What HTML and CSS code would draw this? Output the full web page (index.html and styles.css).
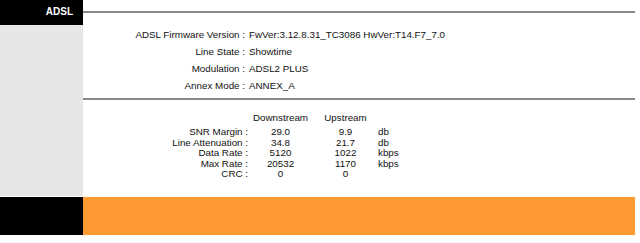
FILE: index.html
```html
<!DOCTYPE html>
<html lang="en">
<head>
    <meta charset="UTF-8">
    <title>ADSL</title>
    <link rel="stylesheet" href="styles.css">
</head>
<body>
    <div class="page">
        <div class="side side-head">ADSL</div>
        <div class="main main-head"><div class="rule"></div></div>

        <div class="side side-body"></div>
        <div class="main main-body">
            <div class="info">
                <div class="label">ADSL Firmware Version :</div>
                <div class="value">FwVer:3.12.8.31_TC3086 HwVer:T14.F7_7.0</div>
                <div class="label">Line State :</div>
                <div class="value">Showtime</div>
                <div class="label">Modulation :</div>
                <div class="value">ADSL2 PLUS</div>
                <div class="label">Annex Mode :</div>
                <div class="value">ANNEX_A</div>
            </div>
            <div class="rule"></div>
            <div class="stats">
                <div></div><div class="num head">Downstream</div><div class="num head">Upstream</div><div class="head"></div>

                <div class="label">SNR Margin :</div><div class="num">29.0</div><div class="num">9.9</div><div>db</div>
                <div class="label">Line Attenuation :</div><div class="num">34.8</div><div class="num">21.7</div><div>db</div>
                <div class="label">Data Rate :</div><div class="num">5120</div><div class="num">1022</div><div>kbps</div>
                <div class="label">Max Rate :</div><div class="num">20532</div><div class="num">1170</div><div>kbps</div>
                <div class="label">CRC :</div><div class="num">0</div><div class="num">0</div><div></div>
            </div>
        </div>

        <div class="side side-foot"></div>
        <div class="main main-foot"></div>
    </div>
</body>
</html>
```

FILE: styles.css
```css
body { margin: 0; font-family: "Liberation Sans", Arial, sans-serif; font-size: 9.8px; color: #111; background: #fff; }
.page { display: grid; grid-template-columns: 83px 552px; }
.side { background: #e6e6e6; }
.side-head { background: #000; color: #fff; font-weight: bold; font-size: 10px; height: 25px; line-height: 24px; text-align: right; padding-right: 10px; box-sizing: border-box; }
.main-head { height: 25px; padding-top: 11px; box-sizing: border-box; }
.rule { height: 2px; background: #888; }

.main-body { height: 171px; padding-top: 1px; box-sizing: border-box; }
.info { display: grid; grid-template-columns: 162px auto; column-gap: 4px; line-height: 17px; margin-bottom: 4px; }
.info .label { text-align: right; }

.stats { display: grid; grid-template-columns: 163px 65px 65px auto; line-height: 10.6px; padding-top: 12px; padding-left: 2px; }
.stats .label { text-align: right; }
.stats .num { text-align: center; }
.stats .head { line-height: 11px; margin-bottom: 4px; }

.side-foot, .main-foot { height: 38px; margin-top: 1px; }
.side-foot { background: #000; }
.main-foot { background: #ff9933; }
```
